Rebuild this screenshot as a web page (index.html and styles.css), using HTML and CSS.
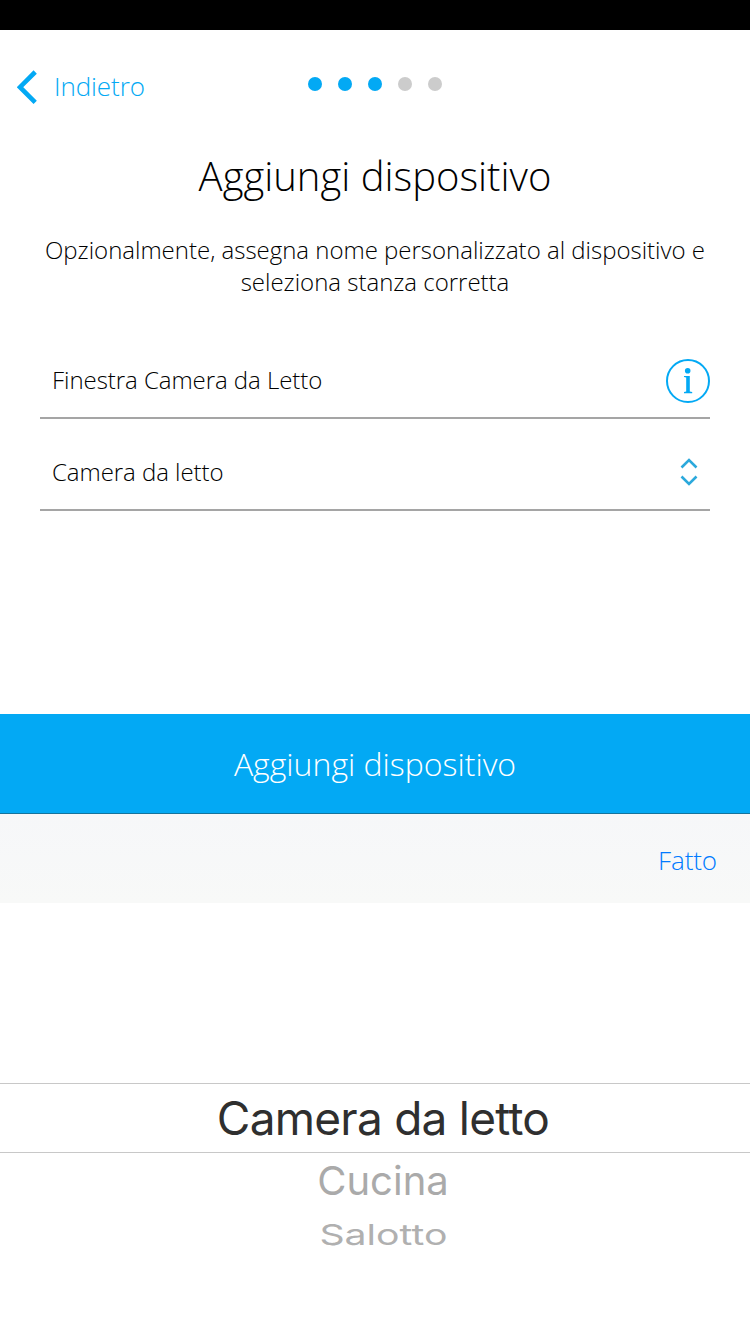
FILE: index.html
```html
<!DOCTYPE html>
<html lang="it">
<head>
<meta charset="utf-8">
<title>Aggiungi dispositivo</title>
<link rel="stylesheet" href="styles.css">
</head>
<body>
<div class="screen">
  <div class="status-bar"></div>
  <header class="nav">
    <a class="back">
      <svg class="back-icon" width="20" height="34" viewBox="0 0 20 34"><path d="M18.200 2 3 17.200l15.200 15.200" fill="none" stroke="#03a9f4" stroke-width="4.600"/></svg>
      <span class="back-label">Indietro</span>
    </a>
    <div class="dots"><i class="dot on"></i><i class="dot on"></i><i class="dot on"></i><i class="dot"></i><i class="dot"></i></div>
  </header>
  <main class="content">
    <h1 class="title"><span class="title-text">Aggiungi dispositivo</span></h1>
    <p class="intro"><span class="intro-a">Opzionalmente, assegna nome personalizzato al dispositivo e</span><br><span class="intro-b">seleziona stanza corretta</span></p>
    <div class="field name-field">
      <span class="name-text">Finestra Camera da Letto</span>
      <svg class="info-icon" width="44" height="44" viewBox="0 0 44 44"><circle cx="22" cy="22" r="21" fill="none" stroke="#03a9f4" stroke-width="2"/><circle cx="21.700" cy="11.700" r="2.800" fill="#03a9f4"/><path d="M18 17h5.800v15.500l2.400.5v1.200H18V33l2.200-.5v-14L18 18z" fill="#03a9f4"/></svg>
    </div>
    <div class="field room-field">
      <span class="room-text">Camera da letto</span>
      <svg class="sort-icon" width="18" height="30" viewBox="0 0 18 30"><path d="m1.500 10.500 7.500-7.500 7.500 7.500M1.500 19.500 9 27l7.500-7.500" fill="none" stroke="#2ca9dc" stroke-width="2.600"/></svg>
    </div>
  </main>
  <button class="submit"><span class="submit-text">Aggiungi dispositivo</span></button>
  <div class="toolbar"><span class="done">Fatto</span></div>
  <div class="picker">
    <div class="option selected"><span class="selected-text">Camera da letto</span></div>
    <div class="option next"><span class="next-text">Cucina</span></div>
    <div class="option far"><span class="far-text">Salotto</span></div>
  </div>
</div>
</body>
</html>
```
FILE: styles.css
```css
* { box-sizing: border-box; }
body { margin: 0; background: #fff; font-family: "Open Sans", sans-serif; font-weight: 300; color: #000; }
.screen { width: 750px; height: 1334px; display: flex; flex-direction: column; overflow: hidden; }
.status-bar { height: 30px; background: #000; }
.nav { height: 110px; display: grid; grid-template-columns: 1fr 134px 1fr; padding: 0 17px; }
.back { display: flex; align-items: center; gap: 17px; height: 114px; color: #03a9f4; font-size: 26px; letter-spacing: -0.1px; }
.back-label { padding-bottom: 2px; }
.dots { display: flex; gap: 16px; padding-top: 47px; }
.dot { width: 14px; height: 14px; border-radius: 50%; background: #ccc; }
.dot.on { background: #03a9f4; }
.content { height: 574px; padding: 0 40px; }
.title { margin: 0; padding-top: 8px; font-size: 40px; font-weight: 300; line-height: 56px; text-align: center; }
.intro { margin: 30px -20px 0; font-size: 24px; line-height: 32px; text-align: center; white-space: nowrap; letter-spacing: -0.01px; }
.field { display: flex; align-items: center; justify-content: space-between; border-bottom: 2px solid #a5a5a5; padding-left: 12px; font-size: 24px; letter-spacing: -0.05px; }
.name-field { margin-top: 45px; height: 76px; padding-top: 2px; }
.name-text { padding-bottom: 4px; }
.room-field { height: 92px; padding-top: 16px; padding-right: 12px; }
.room-text { padding-bottom: 2px; }
.submit { height: 100px; border: 0; border-bottom: 1px solid #14739c; background: #03a9f4; color: #fff; font: 300 32px "Open Sans", sans-serif; }
.toolbar { height: 89px; background: linear-gradient(#f6f7f9, #f8f9f8); display: flex; align-items: center; justify-content: flex-end; padding: 2px 33px 0 0; color: #007aff; font-size: 26px; letter-spacing: -0.1px; }
.picker { padding-top: 180px; font-family: Inter, sans-serif; font-weight: 400; text-align: center; }
.option { padding-left: 16px; }
.selected { height: 70px; border-top: 1px solid #c8c8c8; border-bottom: 1px solid #c8c8c8; font-size: 46px; line-height: 68px; letter-spacing: -0.75px; color: #2f2f2f; }
.next { height: 56px; font-size: 40px; line-height: 56px; color: #aaa; }
.far { height: 52px; font-size: 37px; line-height: 52px; color: #b0b0b0; }
.next-text, .far-text { display: inline-block; }
.far-text { transform: scale(1.06, .78); }
```
